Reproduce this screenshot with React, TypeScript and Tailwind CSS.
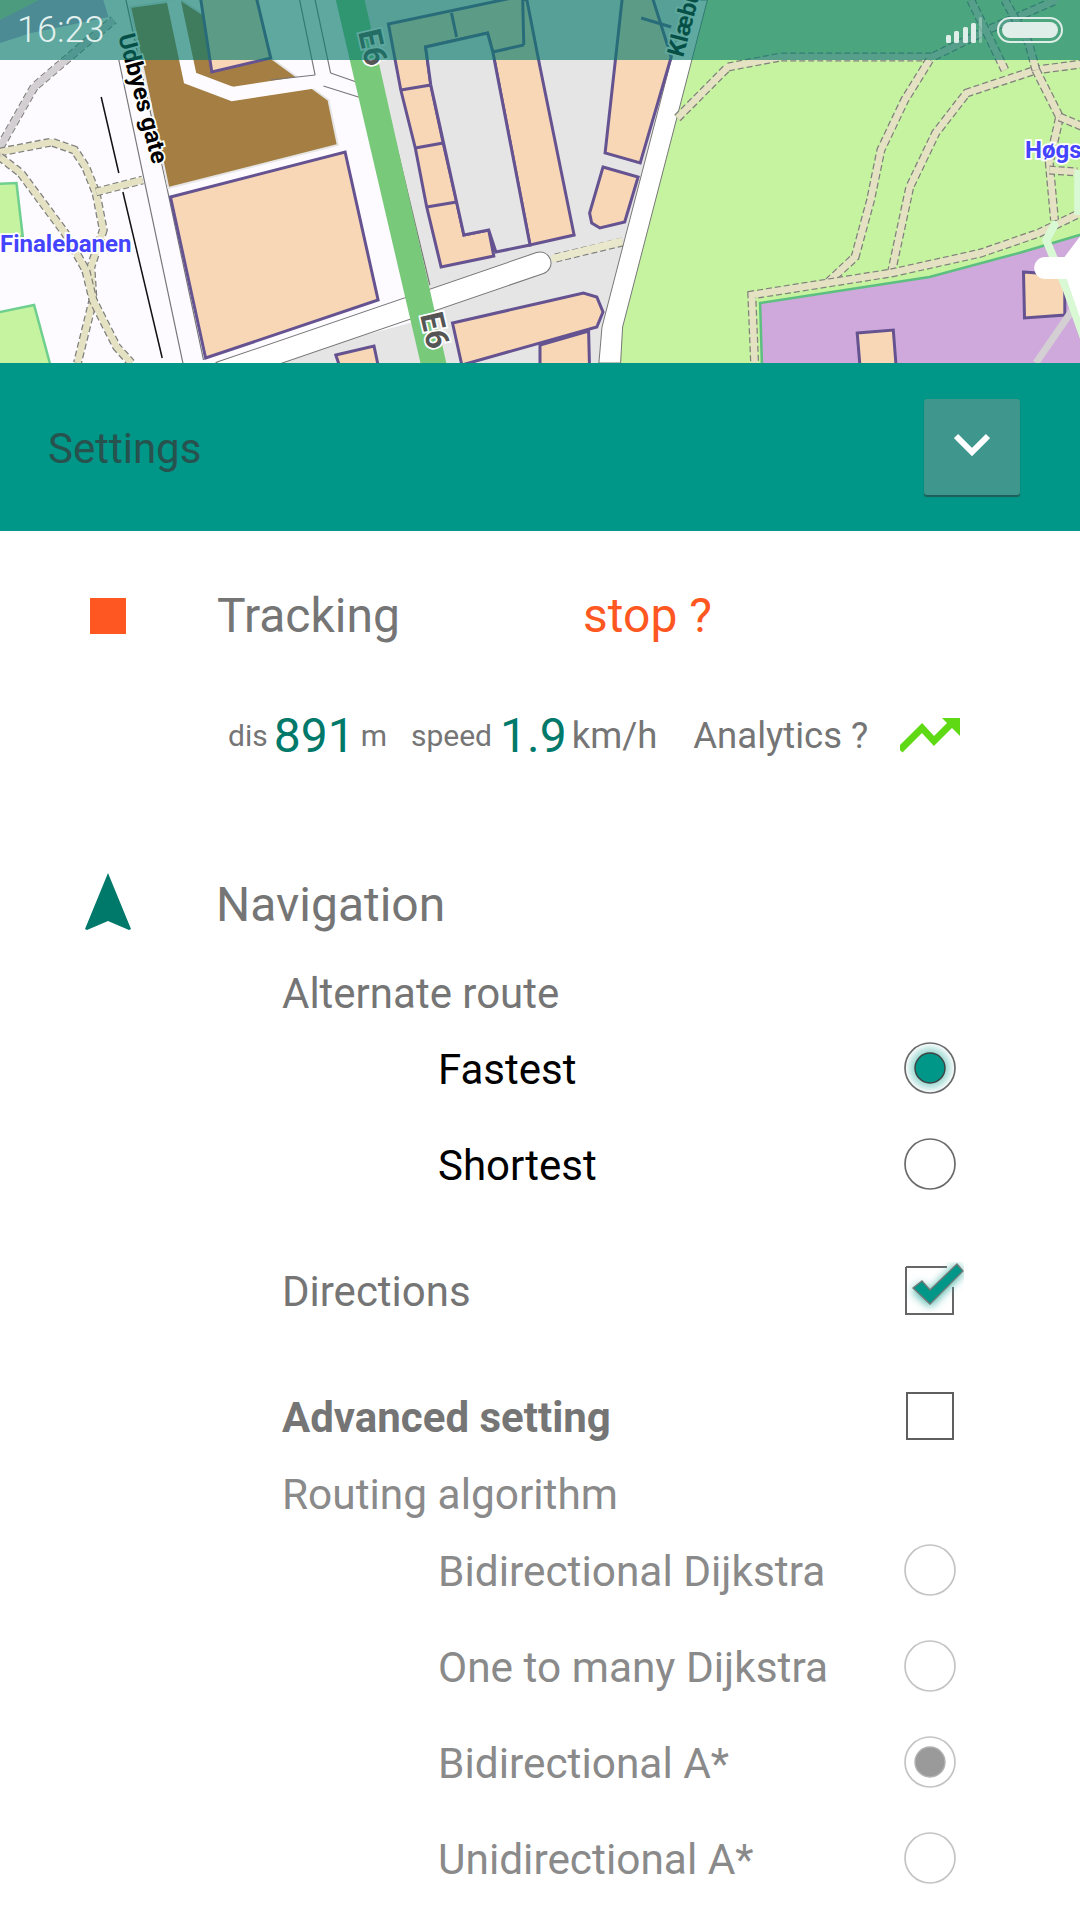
import React from "react";

const PEACH = "#f7d7b5";
const EDGE = "#655291";
const K = 1.0331;
const tx = (x: number) => (x <= 523 ? x * K : x >= 540 ? 540 + (x - 540) * K : 540);
const t = (s: string) =>
  s
    .split(" ")
    .map((pair) => {
      const [x, y] = pair.split(",").map(Number);
      return `${tx(x).toFixed(1)},${y}`;
    })
    .join(" ");

const Pg = ({ p, fill, stroke, w }: { p: string; fill: string; stroke?: string; w?: number }) => (
  <polygon points={t(p)} fill={fill} stroke={stroke} strokeWidth={w} />
);
const Ln = ({ p, c, w, dash, cap }: { p: string; c: string; w: number; dash?: string; cap?: "round" }) => (
  <polyline points={t(p)} fill="none" stroke={c} strokeWidth={w} strokeDasharray={dash} strokeLinecap={cap} />
);
const Path = ({ d }: { d: string }) => (
  <>
    <Ln p={d} c="#80807c" w={9} dash="6 3" />
    <Ln p={d} c="#e5e2c3" w={6.5} />
  </>
);
const B = ({ p }: { p: string }) => <Pg p={p} fill={PEACH} stroke={EDGE} w={3} />;
const L = ({ p }: { p: string }) => <Ln p={p} c={EDGE} w={3} />;
const Thin = ({ p }: { p: string }) => <Ln p={p} c="#777" w={1.2} />;
const Label = ({ x, y, r, size = 24, fill = "#000", children }: { x: number; y: number; r: number; size?: number; fill?: string; children: React.ReactNode }) => (
  <text
    x={x}
    y={y}
    transform={`rotate(${r} ${x} ${y})`}
    fontFamily="Roboto, sans-serif"
    fontWeight={700}
    fontSize={size}
    fill={fill}
    stroke="#fff"
    strokeWidth={3.5}
    paintOrder="stroke"
  >
    {children}
  </text>
);

function MapArt() {
  return (
    <svg viewBox="0 0 1080 363" width={1080} height={363} className="block">
      <rect width={1080} height={363} fill="#fdfbff" />
      {/* top-left */}
      <Pg p="0,0 38,0 42,12 30,14 0,20" fill="#c8d8a0" />
      <Pg p="38,0 100,0 105,17 30,33 0,43 0,20" fill="#c9a6dc" />
      {/* left green */}
      <Pg p="-5,184 16,183 22,236 -5,240" fill="#c5f3a0" stroke="#6fcf8f" w={2.5} />
      <Pg p="-5,313 33,305 50,370 -5,370" fill="#c5f3a0" stroke="#6fcf8f" w={2.5} />
      {/* left paths */}
      <Ln p="0,147 33,87 83,43 110,20" c="#80807c" w={9} dash="6 3" />
      <Ln p="0,147 33,87 83,43 110,20" c="#d3cfd3" w={7} />
      <Path d="0,152 50,142 72,150 83,167 93,193 100,230 88,267 90,300 75,363" />
      <Path d="0,157 20,173 63,233 83,270 90,300 113,347 127,363" />
      <Path d="93,192 138,180" />
      <Ln p="98,97 115,173" c="#111" w={1.5} />
      <Ln p="119,192 157,358" c="#111" w={1.5} />
      <Thin p="115,60 177,363" />
      <Thin p="160,180 197,360" />
      <Thin p="122,0 160,180" />
      {/* brown */}
      <Pg p="126,7 175,0 265,60 318,100 327,145 163,188" fill="#a47e42" stroke="#e6e6e6" w={2} />
      <Ln p="168,0 184,78 225,94 313,80 352,94" c="#fdfbff" w={14} />
      <Pg p="194,-3 248,-3 262,58 205,72" fill={PEACH} stroke={EDGE} w={3} />
      <Thin p="290,0 305,75" />
      <Thin p="305,75 262,80" />
      <Thin p="320,73 345,82" />
      <Thin p="313,86 350,98" />
      <Thin p="305,0 320,73" />
      {/* big block */}
      <B p="165,197 334,152 366,300 199,358" />
      {/* grey block */}
      <Pg p="353,0 702,0 620,330 617,363 430,363 372,95" fill="#e5e5e5" />
      <Pg p="255,363 400,322 410,363" fill="#e5e5e5" />
      <Thin p="372,95 416,285" />
      {/* cross road */}
      <Ln p="215,372 540,263" c="#777" w={23} cap="round" />
      <Ln p="215,372 540,263" c="#fff" w={21} cap="round" />
      <Path d="555,258 620,242" />
      <Ln p="551,259 620,241" c="#e9e7cc" w={7} />
      {/* park */}
      <Pg p="690,0 1080,0 1080,363 617,363 620,327" fill="#c5f3a0" />
      <Pg p="753,303 917,277 1007,252 1085,228 1085,370 755,370" fill="#cfa9dc" stroke="#5cbf80" w={2.5} />
      {/* road klaebu */}
      <Pg p="682,0 702,0 620,327 618,363 597,363 600,327" fill="#fff" stroke="#777" w={1} />
      {/* E6 */}
      <Pg p="325,0 353,0 432,363 407,363" fill="#79c97a" />
      {/* buildings */}
      <B p="376,24 500,-3 510,0 540,67 573,235 513,245 477,52 472,33 412,47 417,85 429,143 442,202 449,235 473,230 478,256 427,267 413,207 402,148 388,90" />
      <Pg p="412,47 472,33 477,52 513,245 480,252 473,230 449,235 417,85" fill="#e5e5e5" stroke={EDGE} w={3} />
      <L p="388,90 417,85" />
      <L p="402,148 429,143" />
      <L p="413,207 442,202" />
      <L p="437,13 442,37" />
      <L p="477,52 507,45" />
      <L p="506,0 507,45" />
      <Pg p="620,-5 648,-5 667,57 637,163 603,153" fill={PEACH} stroke={EDGE} w={3} />
      <L p="638,18 667,27" />
      <B p="601,167 635,177 622,222 598,228 590,223 588,213" />
      <B p="438,323 540,303 582,293 595,297 601,312 595,327 447,365" />
      <B p="540,345 587,331 588,370 540,370" />
      <B p="325,355 362,346 367,370 330,370" />
      <B p="847,333 882,330 885,370 850,370" />
      <B p="1008,272 1048,275 1048,315 1009,318" />
      {/* park paths */}
      <Path d="673,118 722,67 773,57 920,57 973,30 1040,0" />
      <Path d="917,60 893,100 870,150 860,200 845,257 818,283" />
      <Path d="880,273 898,187 923,133 953,93 1020,70 1080,62" />
      <Path d="748,370 745,295 880,273 967,253 1023,233 1063,213 1080,205" />
      <Path d="1020,70 1043,117 1033,163 1038,220" />
      <Path d="1020,70 1013,43 990,0" />
      <Path d="1043,117 1080,133" />
      <Path d="1033,170 1060,172" />
      <Path d="957,0 990,70" />
      <Ln p="1020,363 1062,300" c="#d3cfd3" w={7} />
      <Ln p="1038,225 1030,240 1050,290 1075,363" c="#d9f8d4" w={8} cap="round" />
      <Pg p="1044,262 1082,210 1082,363 1072,345" fill="#fff" />
      <Ln p="1029,268 1060,268" c="#fff" w={22} cap="round" />
      <Ln p="1060,170 1060,215" c="#d9f8d4" w={6} />
      {/* labels */}
      <Label x={118} y={36} r={75}>Udbyes gate</Label>
      <Label x={358} y={32} r={77} size={32} fill="#555">E6</Label>
      <Label x={420} y={315} r={77} size={32} fill="#555">E6</Label>
      <Label x={683} y={58} r={-75}>Klæbu</Label>
      <Label x={0} y={252} r={0} fill="#4444ff">Finalebanen</Label>
      <Label x={1025} y={158} r={0} fill="#4444ff">Høgs</Label>
    </svg>
  );
}

const Radio = ({ on, dim }: { on?: boolean; dim?: boolean }) => {
  const c = dim ? "#c4c4c4" : "#6b6b6b";
  return (
    <svg width={54} height={54} viewBox="0 0 54 54" className="block mb-[4px]">
      <defs>
        <radialGradient id="gn">
          <stop offset="55%" stopColor="#8fd3cc" />
          <stop offset="100%" stopColor="#fff" />
        </radialGradient>
      </defs>
      <circle cx={27} cy={27} r={25} fill={on && !dim ? "url(#gn)" : "#fff"} stroke={c} strokeWidth={1.7} />
      {on && <circle cx={27} cy={27} r={15} fill={dim ? "#9a9a9a" : "#009688"} stroke={dim ? "#b0b0b0" : "#404040"} strokeWidth={1.4} />}
    </svg>
  );
};

const Option = ({ label, on, dim }: { label: string; on?: boolean; dim?: boolean }) => (
  <div className="flex h-[96px] items-center pl-[438px] pr-[123px] justify-between">
    <span className={`leading-none ${dim ? "text-[42.4px] text-[#8a8a8a]" : "text-[42px] text-black"}`}>{label}</span>
    <Radio on={on} dim={dim} />
  </div>
);

export default function App() {
  return (
    <div className="w-[1080px] h-[1920px] overflow-hidden bg-white font-['Roboto',sans-serif]">
      <div className="relative h-[363px]">
        <MapArt />
        <div className="absolute left-0 right-0 top-0 h-[60px] bg-[#097b6da6] flex items-center justify-between pl-[17px] pr-[17px]">
          <span className="text-[36px] font-light text-[#e3f1ee] leading-none">16:23</span>
          <div className="flex items-center gap-[15px]">
            <svg width={36} height={26} viewBox="0 0 36 26" className="block">
              <rect x={0} y={18} width={5} height={8} rx={1.5} fill="#dfeee9" />
              <rect x={8} y={14} width={5} height={12} rx={1.5} fill="#dfeee9" />
              <rect x={17} y={10} width={5} height={16} rx={1.5} fill="#dfeee9" />
              <rect x={25} y={6} width={5} height={20} rx={1.5} fill="#dfeee9" />
              <rect x={33} y={0} width={3} height={26} rx={1.5} fill="#dfeee9" fillOpacity={0.4} />
            </svg>
            <div className="w-[66px] h-[26px] rounded-[13px] border-2 border-[#dfeee9] p-[3px]">
              <div className="h-full rounded-[9px] bg-[#dfeee9]" />
            </div>
          </div>
        </div>
      </div>

      <div className="h-[168px] bg-[#009688] flex items-center justify-between pl-[48px] pr-[60px]">
        <span className="text-[42px] text-[#27524e] leading-none pt-[4px]">Settings</span>
        <div className="w-[96px] h-[96px] rounded-[3px] bg-[#3f968c] shadow-[0_2px_1px_#1f5f59] flex items-center justify-center pb-[6px]">
          <svg width={36} height={24} viewBox="0 0 36 24" className="block">
            <polyline points="2,4 18,20 34,4" fill="none" stroke="#fff" strokeWidth={6} />
          </svg>
        </div>
      </div>

      <div className="h-[170px] flex items-center pl-[90px]">
        <div className="w-[36px] h-[36px] bg-[#ff5722]" />
        <span className="ml-[91px] w-[366px] text-[48px] text-[#757575] leading-none">Tracking</span>
        <span className="text-[48px] text-[#ff5722] leading-none">stop ?</span>
      </div>

      <div className="h-[70px] flex items-center pl-[228px] text-[#757575] leading-none">
        <span className="text-[30px]">dis</span>
        <span className="ml-[6px] text-[48px] text-[#00796b]">891</span>
        <span className="ml-[6px] text-[30px]">m</span>
        <span className="ml-[24px] text-[30px]">speed</span>
        <span className="ml-[8px] text-[48px] text-[#00796b]">1.9</span>
        <span className="ml-[5px] text-[36.5px]">km/h</span>
        <span className="ml-[36px] text-[36.5px]">Analytics ?</span>
        <svg width={60} height={36} viewBox="0 0 60 36" className="ml-[32px] block">
          <path d="M0 32 L22 10 L34 23 L52 5" fill="none" stroke="#5fd914" strokeWidth={7} />
          <polygon points="42,0 60,0 60,18" fill="#5fd914" />
        </svg>
      </div>

      <div className="h-[98px] mt-[85px] flex items-center pl-[85px]">
        <svg width={46} height={58} viewBox="0 0 46 58" className="block mb-[6px]">
          <polygon points="23,0 46,56 44,57 23,48 2,57 0,56" fill="#00796b" />
        </svg>
        <span className="ml-[85px] text-[48px] text-[#757575] leading-none">Navigation</span>
      </div>

      <div className="h-[56px] mt-[12px] flex items-center pl-[282px] text-[42px] text-[#757575] leading-none">Alternate route</div>
      <Option label="Fastest" on />
      <Option label="Shortest" />

      <div className="h-[156px] flex items-center justify-between pl-[282px] pr-[116px]">
        <span className="text-[42px] text-[#757575] leading-none">Directions</span>
        <svg width={60} height={60} viewBox="0 0 60 60" className="block">
          <defs>
            <filter id="glow" x="-40%" y="-40%" width="180%" height="180%">
              <feGaussianBlur stdDeviation="4" />
            </filter>
          </defs>
          <path d="M2 5 H43 M49 25 V52 H2 V5" fill="none" stroke="#666" strokeWidth={2} />
          <path d="M12 25 L26 37 L56 6" fill="none" stroke="#4fb8ad" strokeWidth={12} filter="url(#glow)" />
          <path d="M9 26 L18 19 L26 28 L53 2 L59 9 L26 42 Z" fill="#009688" stroke="#777" strokeWidth={1.3} />
        </svg>
      </div>

      <div className="h-[96px] flex items-center justify-between pl-[282px] pr-[126px]">
        <span className="text-[42px] font-bold text-[#757575] leading-none">Advanced setting</span>
        <div className="w-[48px] h-[48px] border-2 border-[#5f5f5f] mb-[4px]" />
      </div>

      <div className="h-[58px] flex items-center pl-[282px] text-[42.4px] text-[#8a8a8a] leading-none">Routing algorithm</div>
      <Option label="Bidirectional Dijkstra" dim />
      <Option label="One to many Dijkstra" dim />
      <Option label="Bidirectional A*" on dim />
      <Option label="Unidirectional A*" dim />
    </div>
  );
}
